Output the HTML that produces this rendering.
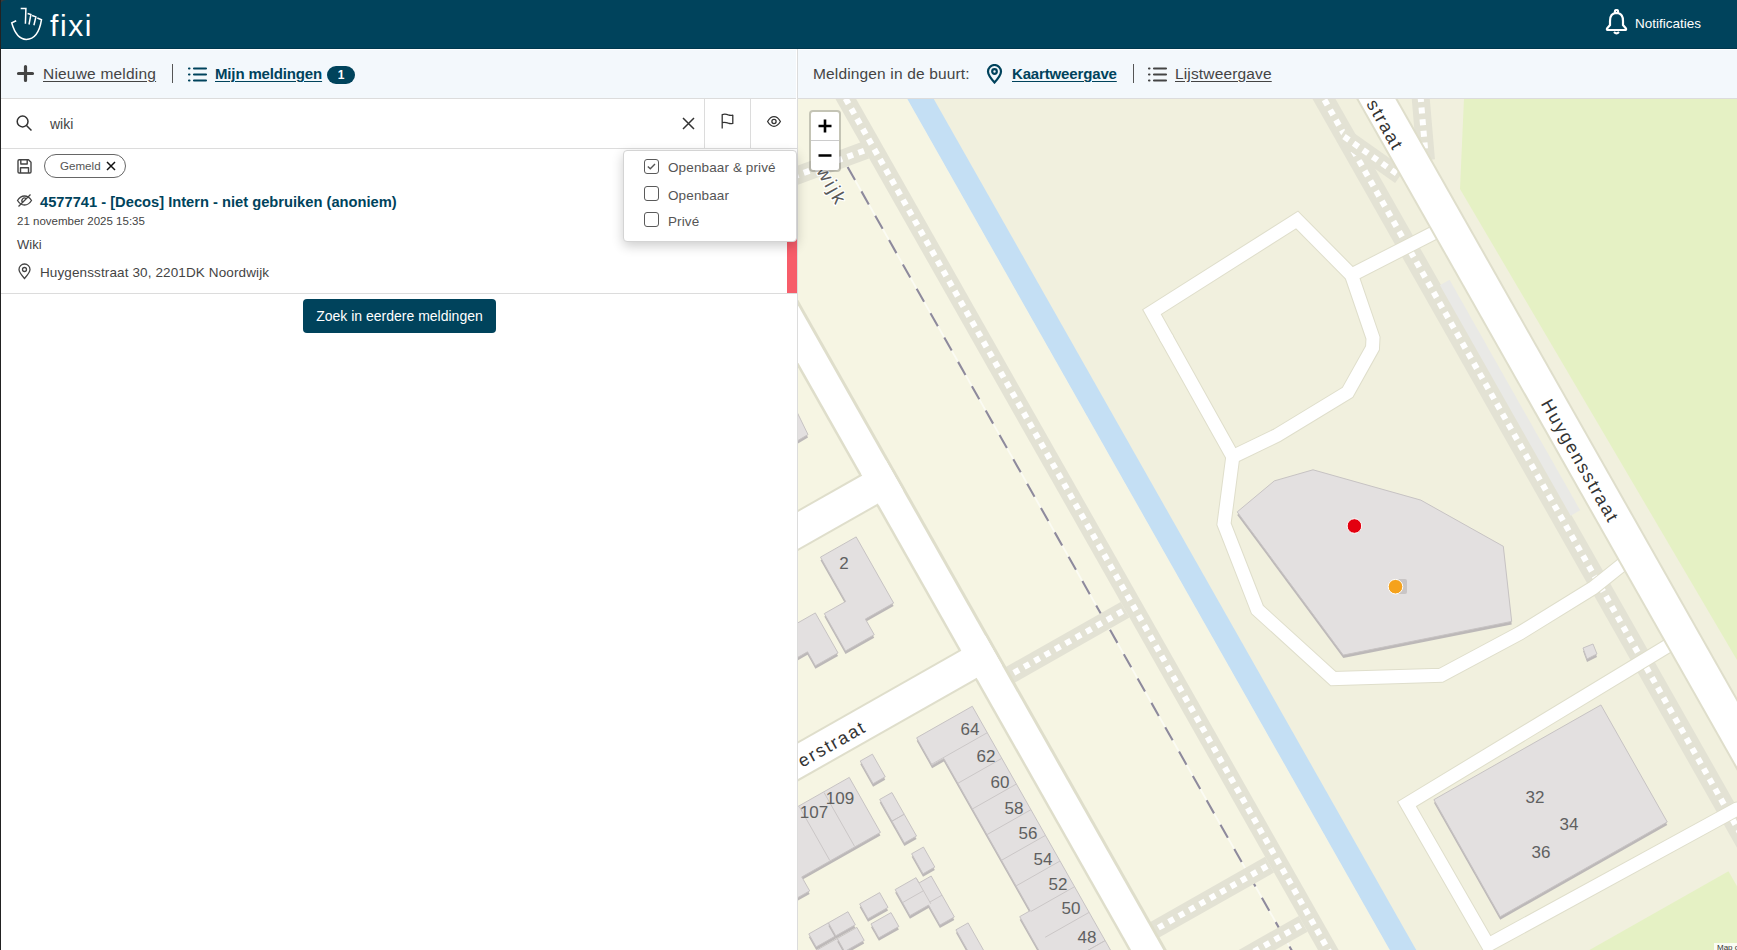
<!DOCTYPE html>
<html><head><meta charset="utf-8">
<style>
*{box-sizing:border-box;margin:0;padding:0}
html,body{width:1737px;height:950px;overflow:hidden;background:#3a3a3a;font-family:"Liberation Sans",sans-serif}
#app{position:absolute;left:0;top:0;width:1737px;height:950px;background:#fff;overflow:hidden}
#lb{position:absolute;left:0;top:0;width:1px;height:950px;background:#222}
.hdr{position:absolute;left:0;top:0;width:1737px;height:49px;background:#00435c;border-top-left-radius:6px;border-bottom:1px solid #00384f}
.abs{position:absolute;white-space:nowrap}
.tb{position:absolute;top:49px;height:50px;background:#f3f8fc;border-top:1px solid #fff;border-bottom:1px solid #dcdcdc}
.tl{font-size:15.5px;letter-spacing:0.2px;color:#444;text-decoration:underline;text-underline-offset:2px}
.tlb{font-size:15px;letter-spacing:-0.15px;color:#00435c;font-weight:bold;text-decoration:underline;text-underline-offset:2px}
</style></head><body>
<div id="app">
<!--MAP-->
<svg style="position:absolute;left:798px;top:99px" width="939" height="851" viewBox="798 99 939 851">
<g transform="translate(797,98) rotate(-29.55)">
<rect x="-700" y="-400" width="795.5" height="2000" fill="#f6f5e3" />
<rect x="95.5" y="-400" width="904.5" height="2000" fill="#f1f0de" />
<rect x="200" y="1132" width="229" height="468" fill="#e5f1c4" />
</g>
<polygon points="1464,98 1460,189 1737,660 1737,98" fill="#e5f1c4"/>
<g transform="translate(797,98) rotate(-29.55)">
<line x1="10" y1="85" x2="10" y2="1400" stroke="#fbfbf3" stroke-width="1.8"/>
<line x1="10" y1="85" x2="10" y2="1400" stroke="#8e8a9c" stroke-width="2.1" stroke-dasharray="15 13"/>
<rect x="33" y="-100" width="18" height="1500" fill="#e3e2d4" />
<rect x="39.0" y="-92.1" width="6.0" height="6.0" fill="#fff" />
<rect x="39.0" y="-80.45" width="6.0" height="6.0" fill="#fff" />
<rect x="39.0" y="-68.8" width="6.0" height="6.0" fill="#fff" />
<rect x="39.0" y="-57.15" width="6.0" height="6.0" fill="#fff" />
<rect x="39.0" y="-45.5" width="6.0" height="6.0" fill="#fff" />
<rect x="39.0" y="-33.85" width="6.0" height="6.0" fill="#fff" />
<rect x="39.0" y="-22.2" width="6.0" height="6.0" fill="#fff" />
<rect x="39.0" y="-10.55" width="6.0" height="6.0" fill="#fff" />
<rect x="39.0" y="1.1" width="6.0" height="6.0" fill="#fff" />
<rect x="39.0" y="12.75" width="6.0" height="6.0" fill="#fff" />
<rect x="39.0" y="24.4" width="6.0" height="6.0" fill="#fff" />
<rect x="39.0" y="36.05" width="6.0" height="6.0" fill="#fff" />
<rect x="39.0" y="47.7" width="6.0" height="6.0" fill="#fff" />
<rect x="39.0" y="59.35" width="6.0" height="6.0" fill="#fff" />
<rect x="39.0" y="71.0" width="6.0" height="6.0" fill="#fff" />
<rect x="39.0" y="82.65" width="6.0" height="6.0" fill="#fff" />
<rect x="39.0" y="94.3" width="6.0" height="6.0" fill="#fff" />
<rect x="39.0" y="105.95" width="6.0" height="6.0" fill="#fff" />
<rect x="39.0" y="117.6" width="6.0" height="6.0" fill="#fff" />
<rect x="39.0" y="129.25" width="6.0" height="6.0" fill="#fff" />
<rect x="39.0" y="140.9" width="6.0" height="6.0" fill="#fff" />
<rect x="39.0" y="152.55" width="6.0" height="6.0" fill="#fff" />
<rect x="39.0" y="164.2" width="6.0" height="6.0" fill="#fff" />
<rect x="39.0" y="175.85" width="6.0" height="6.0" fill="#fff" />
<rect x="39.0" y="187.5" width="6.0" height="6.0" fill="#fff" />
<rect x="39.0" y="199.15" width="6.0" height="6.0" fill="#fff" />
<rect x="39.0" y="210.8" width="6.0" height="6.0" fill="#fff" />
<rect x="39.0" y="222.45" width="6.0" height="6.0" fill="#fff" />
<rect x="39.0" y="234.1" width="6.0" height="6.0" fill="#fff" />
<rect x="39.0" y="245.75" width="6.0" height="6.0" fill="#fff" />
<rect x="39.0" y="257.4" width="6.0" height="6.0" fill="#fff" />
<rect x="39.0" y="269.05" width="6.0" height="6.0" fill="#fff" />
<rect x="39.0" y="280.7" width="6.0" height="6.0" fill="#fff" />
<rect x="39.0" y="292.35" width="6.0" height="6.0" fill="#fff" />
<rect x="39.0" y="304.0" width="6.0" height="6.0" fill="#fff" />
<rect x="39.0" y="315.65" width="6.0" height="6.0" fill="#fff" />
<rect x="39.0" y="327.3" width="6.0" height="6.0" fill="#fff" />
<rect x="39.0" y="338.95" width="6.0" height="6.0" fill="#fff" />
<rect x="39.0" y="350.6" width="6.0" height="6.0" fill="#fff" />
<rect x="39.0" y="362.25" width="6.0" height="6.0" fill="#fff" />
<rect x="39.0" y="373.9" width="6.0" height="6.0" fill="#fff" />
<rect x="39.0" y="385.55" width="6.0" height="6.0" fill="#fff" />
<rect x="39.0" y="397.2" width="6.0" height="6.0" fill="#fff" />
<rect x="39.0" y="408.85" width="6.0" height="6.0" fill="#fff" />
<rect x="39.0" y="420.5" width="6.0" height="6.0" fill="#fff" />
<rect x="39.0" y="432.15" width="6.0" height="6.0" fill="#fff" />
<rect x="39.0" y="443.8" width="6.0" height="6.0" fill="#fff" />
<rect x="39.0" y="455.45" width="6.0" height="6.0" fill="#fff" />
<rect x="39.0" y="467.1" width="6.0" height="6.0" fill="#fff" />
<rect x="39.0" y="478.75" width="6.0" height="6.0" fill="#fff" />
<rect x="39.0" y="490.4" width="6.0" height="6.0" fill="#fff" />
<rect x="39.0" y="502.05" width="6.0" height="6.0" fill="#fff" />
<rect x="39.0" y="513.7" width="6.0" height="6.0" fill="#fff" />
<rect x="39.0" y="525.35" width="6.0" height="6.0" fill="#fff" />
<rect x="39.0" y="537.0" width="6.0" height="6.0" fill="#fff" />
<rect x="39.0" y="548.65" width="6.0" height="6.0" fill="#fff" />
<rect x="39.0" y="560.3" width="6.0" height="6.0" fill="#fff" />
<rect x="39.0" y="571.95" width="6.0" height="6.0" fill="#fff" />
<rect x="39.0" y="583.6" width="6.0" height="6.0" fill="#fff" />
<rect x="39.0" y="595.25" width="6.0" height="6.0" fill="#fff" />
<rect x="39.0" y="606.9" width="6.0" height="6.0" fill="#fff" />
<rect x="39.0" y="618.55" width="6.0" height="6.0" fill="#fff" />
<rect x="39.0" y="630.2" width="6.0" height="6.0" fill="#fff" />
<rect x="39.0" y="641.85" width="6.0" height="6.0" fill="#fff" />
<rect x="39.0" y="653.5" width="6.0" height="6.0" fill="#fff" />
<rect x="39.0" y="665.15" width="6.0" height="6.0" fill="#fff" />
<rect x="39.0" y="676.8" width="6.0" height="6.0" fill="#fff" />
<rect x="39.0" y="688.45" width="6.0" height="6.0" fill="#fff" />
<rect x="39.0" y="700.1" width="6.0" height="6.0" fill="#fff" />
<rect x="39.0" y="711.75" width="6.0" height="6.0" fill="#fff" />
<rect x="39.0" y="723.4" width="6.0" height="6.0" fill="#fff" />
<rect x="39.0" y="735.05" width="6.0" height="6.0" fill="#fff" />
<rect x="39.0" y="746.7" width="6.0" height="6.0" fill="#fff" />
<rect x="39.0" y="758.35" width="6.0" height="6.0" fill="#fff" />
<rect x="39.0" y="770.0" width="6.0" height="6.0" fill="#fff" />
<rect x="39.0" y="781.65" width="6.0" height="6.0" fill="#fff" />
<rect x="39.0" y="793.3" width="6.0" height="6.0" fill="#fff" />
<rect x="39.0" y="804.95" width="6.0" height="6.0" fill="#fff" />
<rect x="39.0" y="816.6" width="6.0" height="6.0" fill="#fff" />
<rect x="39.0" y="828.25" width="6.0" height="6.0" fill="#fff" />
<rect x="39.0" y="839.9" width="6.0" height="6.0" fill="#fff" />
<rect x="39.0" y="851.55" width="6.0" height="6.0" fill="#fff" />
<rect x="39.0" y="863.2" width="6.0" height="6.0" fill="#fff" />
<rect x="39.0" y="874.85" width="6.0" height="6.0" fill="#fff" />
<rect x="39.0" y="886.5" width="6.0" height="6.0" fill="#fff" />
<rect x="39.0" y="898.15" width="6.0" height="6.0" fill="#fff" />
<rect x="39.0" y="909.8" width="6.0" height="6.0" fill="#fff" />
<rect x="39.0" y="921.45" width="6.0" height="6.0" fill="#fff" />
<rect x="39.0" y="933.1" width="6.0" height="6.0" fill="#fff" />
<rect x="39.0" y="944.75" width="6.0" height="6.0" fill="#fff" />
<rect x="39.0" y="956.4" width="6.0" height="6.0" fill="#fff" />
<rect x="39.0" y="968.05" width="6.0" height="6.0" fill="#fff" />
<rect x="39.0" y="979.7" width="6.0" height="6.0" fill="#fff" />
<rect x="39.0" y="991.35" width="6.0" height="6.0" fill="#fff" />
<rect x="39.0" y="1003.0" width="6.0" height="6.0" fill="#fff" />
<rect x="39.0" y="1014.65" width="6.0" height="6.0" fill="#fff" />
<rect x="39.0" y="1026.3" width="6.0" height="6.0" fill="#fff" />
<rect x="39.0" y="1037.95" width="6.0" height="6.0" fill="#fff" />
<rect x="39.0" y="1049.6" width="6.0" height="6.0" fill="#fff" />
<rect x="39.0" y="1061.25" width="6.0" height="6.0" fill="#fff" />
<rect x="39.0" y="1072.9" width="6.0" height="6.0" fill="#fff" />
<rect x="39.0" y="1084.55" width="6.0" height="6.0" fill="#fff" />
<rect x="39.0" y="1096.2" width="6.0" height="6.0" fill="#fff" />
<rect x="39.0" y="1107.85" width="6.0" height="6.0" fill="#fff" />
<rect x="39.0" y="1119.5" width="6.0" height="6.0" fill="#fff" />
<rect x="39.0" y="1131.15" width="6.0" height="6.0" fill="#fff" />
<rect x="39.0" y="1142.8" width="6.0" height="6.0" fill="#fff" />
<rect x="39.0" y="1154.45" width="6.0" height="6.0" fill="#fff" />
<rect x="39.0" y="1166.1" width="6.0" height="6.0" fill="#fff" />
<rect x="39.0" y="1177.75" width="6.0" height="6.0" fill="#fff" />
<rect x="39.0" y="1189.4" width="6.0" height="6.0" fill="#fff" />
<rect x="39.0" y="1201.05" width="6.0" height="6.0" fill="#fff" />
<rect x="39.0" y="1212.7" width="6.0" height="6.0" fill="#fff" />
<rect x="39.0" y="1224.35" width="6.0" height="6.0" fill="#fff" />
<rect x="39.0" y="1236.0" width="6.0" height="6.0" fill="#fff" />
<rect x="39.0" y="1247.65" width="6.0" height="6.0" fill="#fff" />
<rect x="39.0" y="1259.3" width="6.0" height="6.0" fill="#fff" />
<rect x="39.0" y="1270.95" width="6.0" height="6.0" fill="#fff" />
<rect x="39.0" y="1282.6" width="6.0" height="6.0" fill="#fff" />
<rect x="39.0" y="1294.25" width="6.0" height="6.0" fill="#fff" />
<rect x="39.0" y="1305.9" width="6.0" height="6.0" fill="#fff" />
<rect x="39.0" y="1317.55" width="6.0" height="6.0" fill="#fff" />
<rect x="39.0" y="1329.2" width="6.0" height="6.0" fill="#fff" />
<rect x="39.0" y="1340.85" width="6.0" height="6.0" fill="#fff" />
<rect x="39.0" y="1352.5" width="6.0" height="6.0" fill="#fff" />
<rect x="39.0" y="1364.15" width="6.0" height="6.0" fill="#fff" />
<rect x="39.0" y="1375.8" width="6.0" height="6.0" fill="#fff" />
<rect x="39.0" y="1387.45" width="6.0" height="6.0" fill="#fff" />
<rect x="448" y="-100" width="20" height="1500" fill="#e3e2d4" />
<rect x="455.0" y="-99.5" width="6.0" height="6.0" fill="#fff" />
<rect x="455.0" y="-87.85" width="6.0" height="6.0" fill="#fff" />
<rect x="455.0" y="-76.2" width="6.0" height="6.0" fill="#fff" />
<rect x="455.0" y="-64.55" width="6.0" height="6.0" fill="#fff" />
<rect x="455.0" y="-52.9" width="6.0" height="6.0" fill="#fff" />
<rect x="455.0" y="-41.25" width="6.0" height="6.0" fill="#fff" />
<rect x="455.0" y="-29.6" width="6.0" height="6.0" fill="#fff" />
<rect x="455.0" y="-17.95" width="6.0" height="6.0" fill="#fff" />
<rect x="455.0" y="-6.3" width="6.0" height="6.0" fill="#fff" />
<rect x="455.0" y="5.35" width="6.0" height="6.0" fill="#fff" />
<rect x="455.0" y="17.0" width="6.0" height="6.0" fill="#fff" />
<rect x="455.0" y="28.65" width="6.0" height="6.0" fill="#fff" />
<rect x="455.0" y="40.3" width="6.0" height="6.0" fill="#fff" />
<rect x="455.0" y="51.95" width="6.0" height="6.0" fill="#fff" />
<rect x="455.0" y="63.6" width="6.0" height="6.0" fill="#fff" />
<rect x="455.0" y="75.25" width="6.0" height="6.0" fill="#fff" />
<rect x="455.0" y="86.9" width="6.0" height="6.0" fill="#fff" />
<rect x="455.0" y="98.55" width="6.0" height="6.0" fill="#fff" />
<rect x="455.0" y="110.2" width="6.0" height="6.0" fill="#fff" />
<rect x="455.0" y="121.85" width="6.0" height="6.0" fill="#fff" />
<rect x="455.0" y="133.5" width="6.0" height="6.0" fill="#fff" />
<rect x="455.0" y="145.15" width="6.0" height="6.0" fill="#fff" />
<rect x="455.0" y="156.8" width="6.0" height="6.0" fill="#fff" />
<rect x="455.0" y="168.45" width="6.0" height="6.0" fill="#fff" />
<rect x="455.0" y="180.1" width="6.0" height="6.0" fill="#fff" />
<rect x="455.0" y="191.75" width="6.0" height="6.0" fill="#fff" />
<rect x="455.0" y="203.4" width="6.0" height="6.0" fill="#fff" />
<rect x="455.0" y="215.05" width="6.0" height="6.0" fill="#fff" />
<rect x="455.0" y="226.7" width="6.0" height="6.0" fill="#fff" />
<rect x="455.0" y="238.35" width="6.0" height="6.0" fill="#fff" />
<rect x="455.0" y="250.0" width="6.0" height="6.0" fill="#fff" />
<rect x="455.0" y="261.65" width="6.0" height="6.0" fill="#fff" />
<rect x="455.0" y="273.3" width="6.0" height="6.0" fill="#fff" />
<rect x="455.0" y="284.95" width="6.0" height="6.0" fill="#fff" />
<rect x="455.0" y="296.6" width="6.0" height="6.0" fill="#fff" />
<rect x="455.0" y="308.25" width="6.0" height="6.0" fill="#fff" />
<rect x="455.0" y="319.9" width="6.0" height="6.0" fill="#fff" />
<rect x="455.0" y="331.55" width="6.0" height="6.0" fill="#fff" />
<rect x="455.0" y="343.2" width="6.0" height="6.0" fill="#fff" />
<rect x="455.0" y="354.85" width="6.0" height="6.0" fill="#fff" />
<rect x="455.0" y="366.5" width="6.0" height="6.0" fill="#fff" />
<rect x="455.0" y="378.15" width="6.0" height="6.0" fill="#fff" />
<rect x="455.0" y="389.8" width="6.0" height="6.0" fill="#fff" />
<rect x="455.0" y="401.45" width="6.0" height="6.0" fill="#fff" />
<rect x="455.0" y="413.1" width="6.0" height="6.0" fill="#fff" />
<rect x="455.0" y="424.75" width="6.0" height="6.0" fill="#fff" />
<rect x="455.0" y="436.4" width="6.0" height="6.0" fill="#fff" />
<rect x="455.0" y="448.05" width="6.0" height="6.0" fill="#fff" />
<rect x="455.0" y="459.7" width="6.0" height="6.0" fill="#fff" />
<rect x="455.0" y="471.35" width="6.0" height="6.0" fill="#fff" />
<rect x="455.0" y="483.0" width="6.0" height="6.0" fill="#fff" />
<rect x="455.0" y="494.65" width="6.0" height="6.0" fill="#fff" />
<rect x="455.0" y="506.3" width="6.0" height="6.0" fill="#fff" />
<rect x="455.0" y="517.95" width="6.0" height="6.0" fill="#fff" />
<rect x="455.0" y="529.6" width="6.0" height="6.0" fill="#fff" />
<rect x="455.0" y="541.25" width="6.0" height="6.0" fill="#fff" />
<rect x="455.0" y="552.9" width="6.0" height="6.0" fill="#fff" />
<rect x="455.0" y="564.55" width="6.0" height="6.0" fill="#fff" />
<rect x="455.0" y="576.2" width="6.0" height="6.0" fill="#fff" />
<rect x="455.0" y="587.85" width="6.0" height="6.0" fill="#fff" />
<rect x="455.0" y="599.5" width="6.0" height="6.0" fill="#fff" />
<rect x="455.0" y="611.15" width="6.0" height="6.0" fill="#fff" />
<rect x="455.0" y="622.8" width="6.0" height="6.0" fill="#fff" />
<rect x="455.0" y="634.45" width="6.0" height="6.0" fill="#fff" />
<rect x="455.0" y="646.1" width="6.0" height="6.0" fill="#fff" />
<rect x="455.0" y="657.75" width="6.0" height="6.0" fill="#fff" />
<rect x="455.0" y="669.4" width="6.0" height="6.0" fill="#fff" />
<rect x="455.0" y="681.05" width="6.0" height="6.0" fill="#fff" />
<rect x="455.0" y="692.7" width="6.0" height="6.0" fill="#fff" />
<rect x="455.0" y="704.35" width="6.0" height="6.0" fill="#fff" />
<rect x="455.0" y="716.0" width="6.0" height="6.0" fill="#fff" />
<rect x="455.0" y="727.65" width="6.0" height="6.0" fill="#fff" />
<rect x="455.0" y="739.3" width="6.0" height="6.0" fill="#fff" />
<rect x="455.0" y="750.95" width="6.0" height="6.0" fill="#fff" />
<rect x="455.0" y="762.6" width="6.0" height="6.0" fill="#fff" />
<rect x="455.0" y="774.25" width="6.0" height="6.0" fill="#fff" />
<rect x="455.0" y="785.9" width="6.0" height="6.0" fill="#fff" />
<rect x="455.0" y="797.55" width="6.0" height="6.0" fill="#fff" />
<rect x="455.0" y="809.2" width="6.0" height="6.0" fill="#fff" />
<rect x="455.0" y="820.85" width="6.0" height="6.0" fill="#fff" />
<rect x="455.0" y="832.5" width="6.0" height="6.0" fill="#fff" />
<rect x="455.0" y="844.15" width="6.0" height="6.0" fill="#fff" />
<rect x="455.0" y="855.8" width="6.0" height="6.0" fill="#fff" />
<rect x="455.0" y="867.45" width="6.0" height="6.0" fill="#fff" />
<rect x="455.0" y="879.1" width="6.0" height="6.0" fill="#fff" />
<rect x="455.0" y="890.75" width="6.0" height="6.0" fill="#fff" />
<rect x="455.0" y="902.4" width="6.0" height="6.0" fill="#fff" />
<rect x="455.0" y="914.05" width="6.0" height="6.0" fill="#fff" />
<rect x="455.0" y="925.7" width="6.0" height="6.0" fill="#fff" />
<rect x="455.0" y="937.35" width="6.0" height="6.0" fill="#fff" />
<rect x="455.0" y="949.0" width="6.0" height="6.0" fill="#fff" />
<rect x="455.0" y="960.65" width="6.0" height="6.0" fill="#fff" />
<rect x="455.0" y="972.3" width="6.0" height="6.0" fill="#fff" />
<rect x="455.0" y="983.95" width="6.0" height="6.0" fill="#fff" />
<rect x="455.0" y="995.6" width="6.0" height="6.0" fill="#fff" />
<rect x="455.0" y="1007.25" width="6.0" height="6.0" fill="#fff" />
<rect x="455.0" y="1018.9" width="6.0" height="6.0" fill="#fff" />
<rect x="455.0" y="1030.55" width="6.0" height="6.0" fill="#fff" />
<rect x="455.0" y="1042.2" width="6.0" height="6.0" fill="#fff" />
<rect x="455.0" y="1053.85" width="6.0" height="6.0" fill="#fff" />
<rect x="455.0" y="1065.5" width="6.0" height="6.0" fill="#fff" />
<rect x="455.0" y="1077.15" width="6.0" height="6.0" fill="#fff" />
<rect x="455.0" y="1088.8" width="6.0" height="6.0" fill="#fff" />
<rect x="455.0" y="1100.45" width="6.0" height="6.0" fill="#fff" />
<rect x="455.0" y="1112.1" width="6.0" height="6.0" fill="#fff" />
<rect x="455.0" y="1123.75" width="6.0" height="6.0" fill="#fff" />
<rect x="455.0" y="1135.4" width="6.0" height="6.0" fill="#fff" />
<rect x="455.0" y="1147.05" width="6.0" height="6.0" fill="#fff" />
<rect x="455.0" y="1158.7" width="6.0" height="6.0" fill="#fff" />
<rect x="455.0" y="1170.35" width="6.0" height="6.0" fill="#fff" />
<rect x="455.0" y="1182.0" width="6.0" height="6.0" fill="#fff" />
<rect x="455.0" y="1193.65" width="6.0" height="6.0" fill="#fff" />
<rect x="455.0" y="1205.3" width="6.0" height="6.0" fill="#fff" />
<rect x="455.0" y="1216.95" width="6.0" height="6.0" fill="#fff" />
<rect x="455.0" y="1228.6" width="6.0" height="6.0" fill="#fff" />
<rect x="455.0" y="1240.25" width="6.0" height="6.0" fill="#fff" />
<rect x="455.0" y="1251.9" width="6.0" height="6.0" fill="#fff" />
<rect x="455.0" y="1263.55" width="6.0" height="6.0" fill="#fff" />
<rect x="455.0" y="1275.2" width="6.0" height="6.0" fill="#fff" />
<rect x="455.0" y="1286.85" width="6.0" height="6.0" fill="#fff" />
<rect x="455.0" y="1298.5" width="6.0" height="6.0" fill="#fff" />
<rect x="455.0" y="1310.15" width="6.0" height="6.0" fill="#fff" />
<rect x="455.0" y="1321.8" width="6.0" height="6.0" fill="#fff" />
<rect x="455.0" y="1333.45" width="6.0" height="6.0" fill="#fff" />
<rect x="455.0" y="1345.1" width="6.0" height="6.0" fill="#fff" />
<rect x="455.0" y="1356.75" width="6.0" height="6.0" fill="#fff" />
<rect x="455.0" y="1368.4" width="6.0" height="6.0" fill="#fff" />
<rect x="455.0" y="1380.05" width="6.0" height="6.0" fill="#fff" />
<rect x="455.0" y="1391.7" width="6.0" height="6.0" fill="#fff" />
<rect x="-99" y="598" width="132" height="18" fill="#e3e2d4" />
<rect x="-94.9" y="604.0" width="6.0" height="6.0" fill="#fff" />
<rect x="-83.0" y="604.0" width="6.0" height="6.0" fill="#fff" />
<rect x="-71.1" y="604.0" width="6.0" height="6.0" fill="#fff" />
<rect x="-59.2" y="604.0" width="6.0" height="6.0" fill="#fff" />
<rect x="-47.3" y="604.0" width="6.0" height="6.0" fill="#fff" />
<rect x="-35.4" y="604.0" width="6.0" height="6.0" fill="#fff" />
<rect x="-23.5" y="604.0" width="6.0" height="6.0" fill="#fff" />
<rect x="-11.6" y="604.0" width="6.0" height="6.0" fill="#fff" />
<rect x="0.3" y="604.0" width="6.0" height="6.0" fill="#fff" />
<rect x="12.2" y="604.0" width="6.0" height="6.0" fill="#fff" />
<rect x="24.1" y="604.0" width="6.0" height="6.0" fill="#fff" />
<rect x="-99" y="891" width="132" height="18" fill="#e3e2d4" />
<rect x="-94.9" y="897.0" width="6.0" height="6.0" fill="#fff" />
<rect x="-83.0" y="897.0" width="6.0" height="6.0" fill="#fff" />
<rect x="-71.1" y="897.0" width="6.0" height="6.0" fill="#fff" />
<rect x="-59.2" y="897.0" width="6.0" height="6.0" fill="#fff" />
<rect x="-47.3" y="897.0" width="6.0" height="6.0" fill="#fff" />
<rect x="-35.4" y="897.0" width="6.0" height="6.0" fill="#fff" />
<rect x="-23.5" y="897.0" width="6.0" height="6.0" fill="#fff" />
<rect x="-11.6" y="897.0" width="6.0" height="6.0" fill="#fff" />
<rect x="0.3" y="897.0" width="6.0" height="6.0" fill="#fff" />
<rect x="12.2" y="897.0" width="6.0" height="6.0" fill="#fff" />
<rect x="24.1" y="897.0" width="6.0" height="6.0" fill="#fff" />
<rect x="-60" y="959" width="93" height="18" fill="#e3e2d4" />
<rect x="-59.2" y="965.0" width="6.0" height="6.0" fill="#fff" />
<rect x="-47.3" y="965.0" width="6.0" height="6.0" fill="#fff" />
<rect x="-35.4" y="965.0" width="6.0" height="6.0" fill="#fff" />
<rect x="-23.5" y="965.0" width="6.0" height="6.0" fill="#fff" />
<rect x="-11.6" y="965.0" width="6.0" height="6.0" fill="#fff" />
<rect x="0.3" y="965.0" width="6.0" height="6.0" fill="#fff" />
<rect x="12.2" y="965.0" width="6.0" height="6.0" fill="#fff" />
<rect x="24.1" y="965.0" width="6.0" height="6.0" fill="#fff" />
</g>
<g transform="translate(790,178) rotate(-20.22)">
<rect x="0" y="-9.0" width="80.99" height="18.0" fill="#e3e2d4" />
<rect x="3.0" y="-3.0" width="6.0" height="6.0" fill="#fff" />
<rect x="14.65" y="-3.0" width="6.0" height="6.0" fill="#fff" />
<rect x="26.3" y="-3.0" width="6.0" height="6.0" fill="#fff" />
<rect x="37.95" y="-3.0" width="6.0" height="6.0" fill="#fff" />
<rect x="49.6" y="-3.0" width="6.0" height="6.0" fill="#fff" />
<rect x="61.25" y="-3.0" width="6.0" height="6.0" fill="#fff" />
<rect x="72.9" y="-3.0" width="6.0" height="6.0" fill="#fff" />
</g>
<g transform="translate(1341.6,134.8) rotate(35.2)">
<rect x="0" y="-8.5" width="71.47" height="17.0" fill="#e3e2d4" />
<rect x="3.0" y="-3.0" width="6.0" height="6.0" fill="#fff" />
<rect x="14.65" y="-3.0" width="6.0" height="6.0" fill="#fff" />
<rect x="26.3" y="-3.0" width="6.0" height="6.0" fill="#fff" />
<rect x="37.95" y="-3.0" width="6.0" height="6.0" fill="#fff" />
<rect x="49.6" y="-3.0" width="6.0" height="6.0" fill="#fff" />
<rect x="61.25" y="-3.0" width="6.0" height="6.0" fill="#fff" />
</g>
<g transform="translate(1420,90) rotate(85.1)">
<rect x="0" y="-9.0" width="70.26" height="18.0" fill="#e3e2d4" />
<rect x="6.0" y="-3.0" width="6.0" height="6.0" fill="#fff" />
<rect x="17.65" y="-3.0" width="6.0" height="6.0" fill="#fff" />
<rect x="29.3" y="-3.0" width="6.0" height="6.0" fill="#fff" />
<rect x="40.95" y="-3.0" width="6.0" height="6.0" fill="#fff" />
<rect x="52.6" y="-3.0" width="6.0" height="6.0" fill="#fff" />
<rect x="64.25" y="-3.0" width="6.0" height="6.0" fill="#fff" />
</g>
<polyline points="1166.5,338 1152,312 1297,220 1351.5,275 1433.6,233" fill="none" stroke="#dfdecb" stroke-width="15" stroke-linejoin="miter" stroke-linecap="round"/>
<polyline points="1351.5,275 1373,338 1372.5,348 1347.7,392.3 1277,435.3 1232.8,456.7" fill="none" stroke="#dfdecb" stroke-width="15" stroke-linejoin="miter" stroke-linecap="round"/>
<polyline points="1166.5,338 1232.8,456.7 1224,524 1257.4,609.6 1333.2,678.6 1441,675.3 1520,633 1593,588 1628,560" fill="none" stroke="#dfdecb" stroke-width="15" stroke-linejoin="miter" stroke-linecap="round"/>
<polyline points="1671,644 1407,804 1488,945 1737,809" fill="none" stroke="#dfdecb" stroke-width="15" stroke-linejoin="miter" stroke-linecap="round"/>
<polyline points="1166.5,338 1152,312 1297,220 1351.5,275 1433.6,233" fill="none" stroke="#fff" stroke-width="13" stroke-linejoin="miter" stroke-linecap="round"/>
<polyline points="1351.5,275 1373,338 1372.5,348 1347.7,392.3 1277,435.3 1232.8,456.7" fill="none" stroke="#fff" stroke-width="13" stroke-linejoin="miter" stroke-linecap="round"/>
<polyline points="1166.5,338 1232.8,456.7 1224,524 1257.4,609.6 1333.2,678.6 1441,675.3 1520,633 1593,588 1628,560" fill="none" stroke="#fff" stroke-width="13" stroke-linejoin="miter" stroke-linecap="round"/>
<polyline points="1671,644 1407,804 1488,945 1737,809" fill="none" stroke="#fff" stroke-width="13" stroke-linejoin="miter" stroke-linecap="round"/>
<g transform="translate(797,98) rotate(-29.55)">
<rect x="95.5" y="-400" width="23.0" height="2000" fill="#c4dff4" />
<rect x="-132" y="-400" width="33.5" height="2000" fill="#dfdecb" />
<rect x="-700" y="358.6" width="570" height="36.0" fill="#dfdecb" />
<rect x="-700" y="560" width="570" height="35" fill="#dfdecb" />
<rect x="486" y="-400" width="36" height="2000" fill="#dfdecb" />
<rect x="-129.5" y="-400" width="28.0" height="2000" fill="#ffffff" />
<rect x="-700" y="360.6" width="580" height="32.0" fill="#ffffff" />
<rect x="-700" y="562" width="580" height="31" fill="#ffffff" />
<rect x="488" y="-400" width="32" height="2000" fill="#ffffff" />
<rect x="-129.5" y="358.6" width="28.0" height="36.0" fill="#ffffff" />
<rect x="-129.5" y="560" width="28.0" height="35" fill="#ffffff" />
<rect x="467" y="480" width="11" height="265" fill="#e9e9e6" />
</g>
<polygon points="1237.2,514.9 1274.3,483.9 1313,472.8 1420.8,503.1 1503.3,549.3 1511.7,624.4 1343.3,658.1" fill="#bcb8b8"/><polygon points="1237.2,511.9 1274.3,480.9 1313,469.8 1420.8,500.1 1503.3,546.3 1511.7,621.4 1343.3,655.1" fill="#e3e0e0" stroke="#c7c3c3" stroke-width="1"/>
<polygon points="1433.89,802.66 1600.92,707.97 1667.25,824.98 1500.23,919.67" fill="#bcb8b8"/><polygon points="1433.89,799.66 1600.92,704.97 1667.25,821.98 1500.23,916.67" fill="#e3e0e0" stroke="#c7c3c3" stroke-width="1"/>
<polygon points="916.61,740.83 972.29,709.27 1105.15,943.63 1050.78,974.45 1019.71,919.65 1030.15,913.73 943.84,761.49 932.1,768.15" fill="#bcb8b8"/><polygon points="916.61,737.83 972.29,706.27 1105.15,940.63 1050.78,971.45 1019.71,916.65 1030.15,910.73 943.84,758.49 932.1,765.15" fill="#e3e0e0" stroke="#c7c3c3" stroke-width="1"/>
<polygon points="1062.09,968.04 1105.15,943.63 1161.87,1043.67 1118.81,1068.08" fill="#bcb8b8"/><polygon points="1062.09,965.04 1105.15,940.63 1161.87,1040.67 1118.81,1065.08" fill="#e3e0e0" stroke="#c7c3c3" stroke-width="1"/>
<line x1="931.61" y1="764.28" x2="987.28" y2="732.72" stroke="#cbc7c7" stroke-width="1"/>
<line x1="957.9" y1="783.28" x2="1001.83" y2="758.38" stroke="#cbc7c7" stroke-width="1"/>
<line x1="972.45" y1="808.95" x2="1016.38" y2="784.04" stroke="#cbc7c7" stroke-width="1"/>
<line x1="987.0" y1="834.61" x2="1030.93" y2="809.7" stroke="#cbc7c7" stroke-width="1"/>
<line x1="1001.55" y1="860.27" x2="1045.48" y2="835.37" stroke="#cbc7c7" stroke-width="1"/>
<line x1="1016.1" y1="885.94" x2="1060.03" y2="861.03" stroke="#cbc7c7" stroke-width="1"/>
<line x1="1030.64" y1="911.6" x2="1074.58" y2="886.69" stroke="#cbc7c7" stroke-width="1"/>
<line x1="1045.19" y1="937.26" x2="1089.12" y2="912.36" stroke="#cbc7c7" stroke-width="1"/>
<polygon points="683.63,874.3 849.26,780.4 880.43,835.38 801.79,879.96 809.68,893.88 722.69,943.2" fill="#bcb8b8"/><polygon points="683.63,871.3 849.26,777.4 880.43,832.38 801.79,876.96 809.68,890.88 722.69,940.2" fill="#e3e0e0" stroke="#c7c3c3" stroke-width="1"/>
<line x1="824.03" y1="792.5" x2="854.61" y2="846.44" stroke="#cbc7c7" stroke-width="1"/>
<line x1="799.24" y1="806.56" x2="829.82" y2="860.5" stroke="#cbc7c7" stroke-width="1"/>
<polygon points="820.49,560.14 856.16,539.91 893.64,606.03 865.37,622.06 874.25,637.72 845.54,653.99 824.33,616.58 845.65,604.5" fill="#bcb8b8"/><polygon points="820.49,557.14 856.16,536.91 893.64,603.03 865.37,619.06 874.25,634.72 845.54,650.99 824.33,613.58 845.65,601.5" fill="#e3e0e0" stroke="#c7c3c3" stroke-width="1"/>
<polygon points="770.11,641.58 815.34,615.93 838.03,655.95 815.41,668.77 807.52,654.85 784.9,667.68" fill="#bcb8b8"/><polygon points="770.11,638.58 815.34,612.93 838.03,652.95 815.41,665.77 807.52,651.85 784.9,664.68" fill="#e3e0e0" stroke="#c7c3c3" stroke-width="1"/>
<polygon points="860.24,764.06 872.41,757.16 885.24,779.77 873.06,786.68" fill="#bcb8b8"/><polygon points="860.24,761.06 872.41,754.16 885.24,776.77 873.06,783.68" fill="#e3e0e0" stroke="#c7c3c3" stroke-width="1"/>
<polygon points="879.7,802.45 891.88,795.55 904.21,817.3 892.03,824.2" fill="#bcb8b8"/><polygon points="879.7,799.45 891.88,792.55 904.21,814.3 892.03,821.2" fill="#e3e0e0" stroke="#c7c3c3" stroke-width="1"/>
<polygon points="892.03,824.2 904.21,817.3 916.54,839.05 904.36,845.95" fill="#bcb8b8"/><polygon points="892.03,821.2 904.21,814.3 916.54,836.05 904.36,842.95" fill="#e3e0e0" stroke="#c7c3c3" stroke-width="1"/>
<polygon points="911.64,856.77 923.47,850.06 934.82,870.07 922.99,876.77" fill="#bcb8b8"/><polygon points="911.64,853.77 923.47,847.06 934.82,867.07 922.99,873.77" fill="#e3e0e0" stroke="#c7c3c3" stroke-width="1"/>
<polygon points="859.63,906.95 879.63,895.6 888.02,910.39 868.01,921.74" fill="#bcb8b8"/><polygon points="859.63,903.95 879.63,892.6 888.02,907.39 868.01,918.74" fill="#e3e0e0" stroke="#c7c3c3" stroke-width="1"/>
<polygon points="870.97,926.96 890.98,915.61 898.87,929.53 878.86,940.87" fill="#bcb8b8"/><polygon points="870.97,923.96 890.98,912.61 898.87,926.53 878.86,937.87" fill="#e3e0e0" stroke="#c7c3c3" stroke-width="1"/>
<polygon points="808.79,936.92 828.37,925.82 835.76,938.87 816.19,949.96" fill="#bcb8b8"/><polygon points="808.79,933.92 828.37,922.82 835.76,935.87 816.19,946.96" fill="#e3e0e0" stroke="#c7c3c3" stroke-width="1"/>
<polygon points="828.37,925.82 847.94,914.72 855.34,927.77 835.76,938.87" fill="#bcb8b8"/><polygon points="828.37,922.82 847.94,911.72 855.34,924.77 835.76,935.87" fill="#e3e0e0" stroke="#c7c3c3" stroke-width="1"/>
<polygon points="817.67,952.57 837.24,941.48 844.64,954.53 825.07,965.62" fill="#bcb8b8"/><polygon points="817.67,949.57 837.24,938.48 844.64,951.53 825.07,962.62" fill="#e3e0e0" stroke="#c7c3c3" stroke-width="1"/>
<polygon points="837.24,941.48 856.82,930.38 864.21,943.43 844.64,954.53" fill="#bcb8b8"/><polygon points="837.24,938.48 856.82,927.38 864.21,940.43 844.64,951.53" fill="#e3e0e0" stroke="#c7c3c3" stroke-width="1"/>
<polygon points="955.91,932.83 968.09,925.92 989.3,963.33 977.12,970.23" fill="#bcb8b8"/><polygon points="955.91,929.83 968.09,922.92 989.3,960.33 977.12,967.23" fill="#e3e0e0" stroke="#c7c3c3" stroke-width="1"/>
<polygon points="797,415 808,437.6 797,444" fill="#bcb8b8"/><polygon points="797,412 808,434.6 797,441" fill="#e3e0e0" stroke="#c7c3c3" stroke-width="1"/>
<polygon points="895.15,892.56 916.03,880.72 918.99,885.94 931.16,879.03 954.34,919.92 939.9,928.11 928.56,908.1 909.94,918.65" fill="#bcb8b8"/><polygon points="895.15,889.56 916.03,877.72 918.99,882.94 931.16,876.03 954.34,916.92 939.9,925.11 928.56,905.1 909.94,915.65" fill="#e3e0e0" stroke="#c7c3c3" stroke-width="1"/>
<line x1="902.55" y1="902.6" x2="923.42" y2="890.77" stroke="#cbc7c7" stroke-width="1"/>
<line x1="916.03" y1="877.72" x2="930.82" y2="903.82" stroke="#cbc7c7" stroke-width="1"/>
<line x1="929.84" y1="902.08" x2="942.01" y2="895.17" stroke="#cbc7c7" stroke-width="1"/>
<polygon points="1583,651 1593,647 1597,657 1587,662" fill="#bcb8b8"/><polygon points="1583,648 1593,644 1597,654 1587,659" fill="#e3e0e0" stroke="#c7c3c3" stroke-width="1"/>
<text x="970" y="729" transform="rotate(0 970 729)" font-size="17" fill="#606060" letter-spacing="0" text-anchor="middle" dominant-baseline="central" font-family="Liberation Sans, sans-serif">64</text>
<text x="986" y="756" transform="rotate(0 986 756)" font-size="17" fill="#606060" letter-spacing="0" text-anchor="middle" dominant-baseline="central" font-family="Liberation Sans, sans-serif">62</text>
<text x="1000" y="782" transform="rotate(0 1000 782)" font-size="17" fill="#606060" letter-spacing="0" text-anchor="middle" dominant-baseline="central" font-family="Liberation Sans, sans-serif">60</text>
<text x="1014" y="808" transform="rotate(0 1014 808)" font-size="17" fill="#606060" letter-spacing="0" text-anchor="middle" dominant-baseline="central" font-family="Liberation Sans, sans-serif">58</text>
<text x="1028" y="833" transform="rotate(0 1028 833)" font-size="17" fill="#606060" letter-spacing="0" text-anchor="middle" dominant-baseline="central" font-family="Liberation Sans, sans-serif">56</text>
<text x="1043" y="859" transform="rotate(0 1043 859)" font-size="17" fill="#606060" letter-spacing="0" text-anchor="middle" dominant-baseline="central" font-family="Liberation Sans, sans-serif">54</text>
<text x="1058" y="884" transform="rotate(0 1058 884)" font-size="17" fill="#606060" letter-spacing="0" text-anchor="middle" dominant-baseline="central" font-family="Liberation Sans, sans-serif">52</text>
<text x="1071" y="908" transform="rotate(0 1071 908)" font-size="17" fill="#606060" letter-spacing="0" text-anchor="middle" dominant-baseline="central" font-family="Liberation Sans, sans-serif">50</text>
<text x="1087" y="937" transform="rotate(0 1087 937)" font-size="17" fill="#606060" letter-spacing="0" text-anchor="middle" dominant-baseline="central" font-family="Liberation Sans, sans-serif">48</text>
<text x="814" y="812" transform="rotate(0 814 812)" font-size="17" fill="#606060" letter-spacing="0" text-anchor="middle" dominant-baseline="central" font-family="Liberation Sans, sans-serif">107</text>
<text x="840" y="798" transform="rotate(0 840 798)" font-size="17" fill="#606060" letter-spacing="0" text-anchor="middle" dominant-baseline="central" font-family="Liberation Sans, sans-serif">109</text>
<text x="844" y="563" transform="rotate(0 844 563)" font-size="17" fill="#606060" letter-spacing="0" text-anchor="middle" dominant-baseline="central" font-family="Liberation Sans, sans-serif">2</text>
<text x="1535" y="797" transform="rotate(0 1535 797)" font-size="17" fill="#606060" letter-spacing="0" text-anchor="middle" dominant-baseline="central" font-family="Liberation Sans, sans-serif">32</text>
<text x="1569" y="824" transform="rotate(0 1569 824)" font-size="17" fill="#606060" letter-spacing="0" text-anchor="middle" dominant-baseline="central" font-family="Liberation Sans, sans-serif">34</text>
<text x="1541" y="852" transform="rotate(0 1541 852)" font-size="17" fill="#606060" letter-spacing="0" text-anchor="middle" dominant-baseline="central" font-family="Liberation Sans, sans-serif">36</text>
<text x="1580" y="461" transform="rotate(60.45 1580 461)" font-size="18" fill="#333" letter-spacing="1.75" text-anchor="middle" dominant-baseline="central" font-family="Liberation Sans, sans-serif" stroke="#fff" stroke-width="2.5" paint-order="stroke" stroke-linejoin="round">Huygensstraat</text>
<text x="1385" y="125" transform="rotate(60.45 1385 125)" font-size="18" fill="#333" letter-spacing="1.75" text-anchor="middle" dominant-baseline="central" font-family="Liberation Sans, sans-serif" stroke="#fff" stroke-width="2.5" paint-order="stroke" stroke-linejoin="round">straat</text>
<text x="832" y="744" transform="rotate(-29.55 832 744)" font-size="18" fill="#333" letter-spacing="1.75" text-anchor="middle" dominant-baseline="central" font-family="Liberation Sans, sans-serif" stroke="#fff" stroke-width="2.5" paint-order="stroke" stroke-linejoin="round">erstraat</text>
<text x="832" y="186" transform="rotate(60.45 832 186)" font-size="19" fill="#5a5a5a" letter-spacing="2.6" text-anchor="middle" dominant-baseline="central" font-family="Liberation Sans, sans-serif" stroke="#fff" stroke-width="2.5" paint-order="stroke" stroke-linejoin="round">wijk</text>
<rect x="1397" y="579" width="10" height="15" rx="2" fill="#c9c5c5"/>
<circle cx="1395.5" cy="586.7" r="7.3" fill="#f5a21c" stroke="#fff" stroke-width="1"/>
<circle cx="1354.4" cy="526" r="7.3" fill="#e3000f" stroke="#fff" stroke-width="1"/>
</svg>
<div style="position:absolute;left:809px;top:110px;width:32px;height:62px;border:2px solid rgba(0,0,0,.2);border-radius:4px;background:#fff;background-clip:padding-box"></div>
<div style="position:absolute;left:811px;top:140px;width:28px;height:1px;background:#ccc"></div>
<svg style="position:absolute;left:817px;top:118px" width="16" height="46" viewBox="0 0 16 46" stroke="#000" stroke-width="2.6"><path d="M8 1.5V14.5M1.5 8H14.5M1.5 37.5H14.5"/></svg>
<div style="position:absolute;left:1714px;top:943px;width:30px;height:10px;background:rgba(255,255,255,.8);font-size:8px;color:#333;line-height:10px;padding-left:3px;font-family:Liberation Sans,sans-serif">Map d</div>
<!--/MAP-->
  <div style="position:absolute;left:0;top:0;width:8px;height:8px;background:#3a3a3a"></div>
  <div class="hdr">
    <svg class="abs" style="left:10px;top:7px" width="34" height="35" viewBox="0 0 34 35" fill="none" stroke="#fff" stroke-width="1.5">
      <path d="M10.7 1.6 L15.9 1.6 L15.4 16.8"/>
      <path d="M17.6 6.5 L20.9 7.5 L19 17.5"/>
      <path d="M22.1 8.5 L25.9 9.9 L23.9 18.2"/>
      <path d="M27.3 11 L31.5 12.7 C30 22 26 32.4 16.3 32.4 C8 32.4 4 24 1.7 15.8 L6.2 13.7"/>
    </svg>
    <div class="abs" style="left:50px;top:9px;font-size:30px;color:#fff;letter-spacing:1.6px">fixi</div>
    <svg class="abs" style="left:1605px;top:9px" width="23" height="26" viewBox="0 0 23 26" fill="none" stroke="#fff" stroke-width="2.2">
      <path d="M11.5 4 C6 4 5 8 5 12 L5 16 L2 19.5 Q1.5 21 3 21 L20 21 Q21.5 21 21 19.5 L18 16 L18 12 C18 8 17 4 11.5 4 Z"/>
      <circle cx="11.5" cy="2.6" r="1.6"/>
      <path d="M9 23 Q11.5 25.5 14 23"/>
    </svg>
    <div class="abs" style="left:1635px;top:16px;font-size:13.5px;color:#fff">Notificaties</div>
  </div>
  <!-- left toolbar -->
  <div class="tb" style="left:0;width:796px"></div>
  <div class="tb" style="left:797px;width:940px"></div>

  <!-- left toolbar content -->
  <svg class="abs" style="left:16px;top:64px" width="19" height="19" viewBox="0 0 19 19" stroke="#444" stroke-width="3.2" stroke-linecap="round"><path d="M9.5 2.5V16.5M2.5 9.5H16.5"/></svg>
  <div class="abs tl" style="left:43px;top:65px">Nieuwe melding</div>
  <div class="abs" style="left:172px;top:64px;width:1px;height:19px;background:#555"></div>
  <svg class="abs" style="left:187px;top:66px" width="21" height="17" viewBox="0 0 21 17" stroke="#00435c" stroke-width="2.1" stroke-linecap="round"><path d="M2 2.5h.5M7 2.5h12M2 8.5h.5M7 8.5h12M2 14.5h.5M7 14.5h12"/></svg>
  <div class="abs tlb" style="left:215px;top:65px">Mijn meldingen</div>
  <div class="abs" style="left:327px;top:66px;width:28px;height:18px;border-radius:9px;background:#00435c;color:#fff;font-size:12px;font-weight:bold;text-align:center;line-height:18px">1</div>
  <!-- right toolbar content -->
  <div class="abs" style="left:813px;top:65px;font-size:15.5px;letter-spacing:0.15px;color:#444">Meldingen in de buurt:</div>
  <svg class="abs" style="left:986px;top:64px" width="17" height="20" viewBox="0 0 17 20" fill="none" stroke="#00435c" stroke-width="2.2"><path d="M8.5 18.5 C4 13.5 2 10.5 2 7.5 A6.5 6.5 0 0 1 15 7.5 C15 10.5 13 13.5 8.5 18.5Z"/><circle cx="8.5" cy="7.5" r="2.3"/></svg>
  <div class="abs tlb" style="left:1012px;top:65px">Kaartweergave</div>
  <div class="abs" style="left:1133px;top:64px;width:1px;height:19px;background:#555"></div>
  <svg class="abs" style="left:1147px;top:66px" width="21" height="17" viewBox="0 0 21 17" stroke="#444" stroke-width="2.1" stroke-linecap="round"><path d="M2 2.5h.5M7 2.5h12M2 8.5h.5M7 8.5h12M2 14.5h.5M7 14.5h12"/></svg>
  <div class="abs tl" style="left:1175px;top:65px;letter-spacing:0.15px">Lijstweergave</div>

  <!-- search row -->
  <div class="abs" style="left:0;top:148px;width:797px;height:1px;background:#dcdcdc"></div>
  <svg class="abs" style="left:15px;top:114px" width="19" height="19" viewBox="0 0 19 19" fill="none" stroke="#333" stroke-width="1.5"><circle cx="7.6" cy="7.5" r="5.4"/><path d="M11.5 11.5 L16.5 16.5"/></svg>
  <div class="abs" style="left:50px;top:116px;font-size:14px;color:#444">wiki</div>
  <svg class="abs" style="left:681px;top:116px" width="15" height="15" viewBox="0 0 15 15" stroke="#333" stroke-width="1.5"><path d="M2 2L13 13M13 2L2 13"/></svg>
  <div class="abs" style="left:704px;top:99px;width:1px;height:49px;background:#dcdcdc"></div>
  <div class="abs" style="left:750px;top:99px;width:1px;height:49px;background:#dcdcdc"></div>
  <svg class="abs" style="left:719px;top:112px" width="17" height="19" viewBox="0 0 17 19" fill="none" stroke="#333" stroke-width="1.3" stroke-linejoin="round"><path d="M3.2 16.4V2.6C5.5 1.9 7.5 2.2 9.3 2.9C11 3.5 12.5 3.5 13.8 3.1V11.4C12.5 11.8 11 11.8 9.3 11.2C7.5 10.5 5.5 10.2 3.2 10.6"/></svg>
  <svg class="abs" style="left:765px;top:114px" width="18" height="15" viewBox="0 0 18 15" fill="none" stroke="#333" stroke-width="1.3"><path d="M2.6 7.5C4.6 4 6.7 2.7 9 2.7C11.3 2.7 13.4 4 15.4 7.5C13.4 11 11.3 12.3 9 12.3C6.7 12.3 4.6 11 2.6 7.5Z"/><circle cx="9" cy="7.5" r="2.1"/></svg>

  <!-- chips row -->
  <svg class="abs" style="left:16px;top:158px" width="17" height="17" viewBox="0 0 17 17" fill="none" stroke="#444" stroke-width="1.4" stroke-linejoin="round"><path d="M2 3Q2 1.8 3.2 1.8H12.5L15 4.3V13.8Q15 15 13.8 15H3.2Q2 15 2 13.8Z"/><path d="M4.8 1.8V6H11.2V1.8"/><path d="M4.5 15V9.8H12.5V15"/></svg>
  <div class="abs" style="left:44px;top:154px;width:82px;height:24px;border:1px solid #666;border-radius:12px"></div>
  <div class="abs" style="left:60px;top:159px;font-size:11.6px;color:#555">Gemeld</div>
  <svg class="abs" style="left:105px;top:160px" width="12" height="12" viewBox="0 0 12 12" stroke="#111" stroke-width="1.5"><path d="M2 2L10 10M10 2L2 10"/></svg>

  <!-- item -->
  <svg class="abs" style="left:16px;top:193px" width="17" height="15" viewBox="0 0 17 15" fill="none" stroke="#444" stroke-width="1.3"><path d="M1.5 7.5C3.5 4.3 6 3 8.5 3C11 3 13.5 4.3 15.5 7.5C13.5 10.7 11 12 8.5 12C6 12 3.5 10.7 1.5 7.5Z"/><path d="M6.8 9.5A2.4 2.4 0 0 1 10.2 5.7"/><path d="M14.5 1.5L2.5 13.5"/></svg>
  <div class="abs" style="left:40px;top:194px;font-size:14.7px;font-weight:bold;color:#00435c">4577741 - [Decos] Intern - niet gebruiken (anoniem)</div>
  <div class="abs" style="left:17px;top:215px;font-size:11.5px;color:#444">21 november 2025 15:35</div>
  <div class="abs" style="left:17px;top:237px;font-size:13px;color:#444">Wiki</div>
  <svg class="abs" style="left:17px;top:263px" width="15" height="17" viewBox="0 0 15 17" fill="none" stroke="#444" stroke-width="1.3"><path d="M7.5 15.5C4 11.5 2 9 2 6.5A5.5 5.5 0 0 1 13 6.5C13 9 11 11.5 7.5 15.5Z"/><circle cx="7.5" cy="6.5" r="2"/></svg>
  <div class="abs" style="left:40px;top:265px;font-size:13.5px;letter-spacing:0.12px;color:#444">Huygensstraat 30, 2201DK Noordwijk</div>
  <div class="abs" style="left:787px;top:181px;width:10px;height:112px;background:#f75d6a"></div>
  <div class="abs" style="left:0;top:293px;width:797px;height:1px;background:#dcdcdc"></div>

  <!-- button -->
  <div class="abs" style="left:303px;top:299px;width:193px;height:34px;border-radius:4px;background:#00435c;color:#fff;font-size:14px;text-align:center;line-height:34px">Zoek in eerdere meldingen</div>

  <!-- divider -->
  <div class="abs" style="left:797px;top:49px;width:1px;height:901px;background:#dcdcdc"></div>

  <!-- popup -->
  <div class="abs" style="left:623px;top:150px;width:174px;height:92px;background:#fff;border:1px solid #d4d4d4;border-radius:4px;box-shadow:0 4px 12px rgba(0,0,0,.2)">
    <div class="abs" style="left:20px;top:8px;width:14.5px;height:14.5px;border:1.8px solid #5a5a5a;border-radius:3px"></div>
    <svg class="abs" style="left:22px;top:10px" width="11" height="11" viewBox="0 0 11 11" fill="none" stroke="#555" stroke-width="1.4"><path d="M1.8 5.4L4.3 7.7L9 3"/></svg>
    <div class="abs" style="left:20px;top:35px;width:14.5px;height:14.5px;border:1.8px solid #5a5a5a;border-radius:3px"></div>
    <div class="abs" style="left:20px;top:61px;width:14.5px;height:14.5px;border:1.8px solid #5a5a5a;border-radius:3px"></div>
    <div class="abs" style="left:44px;top:9px;font-size:13.5px;letter-spacing:0.12px;color:#555">Openbaar &amp; privé</div>
    <div class="abs" style="left:44px;top:37px;font-size:13.5px;letter-spacing:0.12px;color:#555">Openbaar</div>
    <div class="abs" style="left:44px;top:63px;font-size:13.5px;letter-spacing:0.12px;color:#555">Privé</div>
  </div>
</div>
<div id="lb"></div>
</body></html>
